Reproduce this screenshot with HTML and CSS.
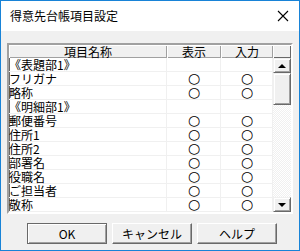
FILE: index.html
```html
<!DOCTYPE html>
<html lang="ja">
<head>
    <meta charset="UTF-8">
    <title>得意先台帳項目設定</title>
    <link rel="stylesheet" href="styles.css">
</head>
<body>
    <div class="window">
        <!-- Title bar -->
        <div class="titlebar">
            <span class="title">得意先台帳項目設定</span>
            <svg class="close" width="12" height="12" viewBox="0 0 12 12">
                <path d="M1 1 L11 11 M11 1 L1 11" stroke="#000" stroke-width="1.1" fill="none"/>
            </svg>
        </div>

        <div class="client">
            <!-- Item grid -->
            <div class="grid">
                <div class="head">項目名称</div>
                <div class="head">表示</div>
                <div class="head">入力</div>
                <div class="head corner"></div>

                <div class="rows">
                    <div class="row"><span>《表題部1》</span><span></span><span></span></div>
                    <div class="row"><span>フリガナ</span><span class="mark">○</span><span class="mark">○</span></div>
                    <div class="row"><span>略称</span><span class="mark">○</span><span class="mark">○</span></div>
                    <div class="row"><span>《明細部1》</span><span></span><span></span></div>
                    <div class="row"><span>郵便番号</span><span class="mark">○</span><span class="mark">○</span></div>
                    <div class="row"><span>住所1</span><span class="mark">○</span><span class="mark">○</span></div>
                    <div class="row"><span>住所2</span><span class="mark">○</span><span class="mark">○</span></div>
                    <div class="row"><span>部署名</span><span class="mark">○</span><span class="mark">○</span></div>
                    <div class="row"><span>役職名</span><span class="mark">○</span><span class="mark">○</span></div>
                    <div class="row"><span>ご担当者</span><span class="mark">○</span><span class="mark">○</span></div>
                    <div class="row"><span>敬称</span><span class="mark">○</span><span class="mark">○</span></div>
                </div>

                <div class="vscroll">
                    <div class="sb-btn"><i class="arrow up"></i></div>
                    <div class="sb-thumb"></div>
                    <div class="sb-track"></div>
                    <div class="sb-btn"><i class="arrow down"></i></div>
                </div>
            </div>

            <!-- Buttons -->
            <div class="buttons">
                <button class="btn default">OK</button>
                <button class="btn">キャンセル</button>
                <button class="btn">ヘルプ</button>
            </div>
        </div>
    </div>
</body>
</html>
```

FILE: styles.css
```css
/* Dialog window */
* {
    box-sizing: border-box;
}

body {
    margin: 0;
    font-family: "Noto Sans CJK JP", "DejaVu Sans", sans-serif;
    font-size: 12px;
    color: #000;
    background: #fff;
}

.window {
    width: 300px;
    height: 251px;
    border: 1px solid #1883d7;
    display: flex;
    flex-direction: column;
}

.titlebar {
    height: 30px;
    background: #fff;
    display: flex;
    align-items: center;
    justify-content: space-between;
    padding: 0 10px 0 9px;
}

.title {
    font-size: 12px;
    line-height: 14px;
}

.close {
    display: block;
}

.client {
    flex: 1;
    background: #f0f0f0;
    padding: 12px 6px 0 6px;
}

/* Item grid */
.grid {
    height: 171px;
    border-style: solid;
    border-width: 2px;
    border-color: #a0a0a0 #fff #fff #a0a0a0;
    box-shadow: inset 1px 1px #696969, inset -1px -1px #e3e3e3;
    background: #fff;
    display: grid;
    grid-template-columns: 158px 54px 52px 1fr;
    grid-template-rows: 13px 1fr;
}

.head {
    background: #f0f0f0;
    box-shadow: inset 1px 1px #fff, inset -1px -1px #a0a0a0;
    text-align: center;
    line-height: 13px;
}

.head.corner {
    box-shadow: inset 1px 1px #fff, inset -1px -1px #696969;
}

.rows {
    grid-column: 1 / 4;
}

.row {
    display: grid;
    grid-template-columns: 158px 54px 52px;
    height: 14px;
}

.row span {
    box-shadow: inset -1px -1px #f0f0f0;
    line-height: 14px;
    white-space: nowrap;
}

.row .mark {
    text-align: center;
    font-family: "DejaVu Sans", sans-serif;
    font-size: 14px;
    line-height: 13px;
}

/* Scrollbar */
.vscroll {
    display: flex;
    flex-direction: column;
    background: #f0f0f0;
}

.sb-btn,
.sb-thumb {
    background: #f0f0f0;
    border-style: solid;
    border-width: 1px;
    border-color: #f0f0f0 #696969 #696969 #f0f0f0;
    box-shadow: inset 1px 1px #fff, inset -1px -1px #a0a0a0;
}

.sb-btn {
    height: 15px;
    display: flex;
    align-items: center;
    justify-content: center;
}

.sb-thumb {
    height: 32px;
}

.sb-track {
    flex: 1;
    background-color: #fff;
    background-image: repeating-conic-gradient(#f0f0f0 0 25%, #fff 0 50%);
    background-size: 2px 2px;
}

.arrow {
    width: 0;
    height: 0;
    border-left: 4px solid transparent;
    border-right: 4px solid transparent;
}

.arrow.up {
    border-bottom: 4px solid #000;
}

.arrow.down {
    border-top: 4px solid #000;
}

/* Buttons */
.buttons {
    display: flex;
    gap: 5px;
    padding-left: 20px;
    margin-top: 9px;
}

.btn {
    width: 80px;
    height: 21px;
    padding: 0;
    background: #f0f0f0;
    font-family: inherit;
    font-size: 12px;
    color: #000;
    border-style: solid;
    border-width: 1px;
    border-color: #fff #696969 #696969 #fff;
    box-shadow: inset -1px -1px #a0a0a0;
}

.btn.default {
    border-color: #696969;
    box-shadow: inset 1px 1px #fff, inset -1px -1px #a0a0a0;
}
```
